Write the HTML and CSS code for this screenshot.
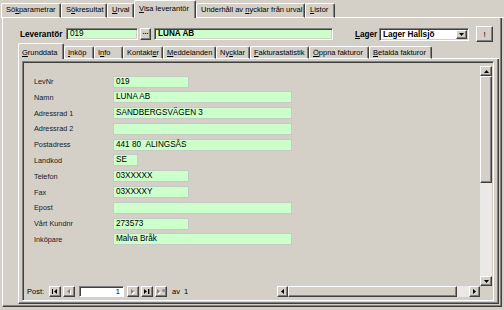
FILE: index.html
```html
<!DOCTYPE html>
<html>
<head>
    <title>Visa leverantör</title>
    <link rel="stylesheet" href="styles.css">
</head>
<body>
    <div class="app">
        <!-- main tabs -->
        <div class="top-tabs">
            <div class="tab">Sö<u>k</u>parametrar</div>
            <div class="tab">S<u>ö</u>kresultat</div>
            <div class="tab"><u>U</u>rval</div>
            <div class="tab active"><u>V</u>isa leverantör</div>
            <div class="tab">Underhåll av <u>n</u>ycklar från urval</div>
            <div class="tab"><u>L</u>istor</div>
            <div class="tab-fill"></div>
        </div>

        <div class="page">
            <!-- supplier header -->
            <div class="header">
                <span class="bold-label lev-label">Leverantör</span>
                <div class="field sunken lev-nr">019</div>
                <div class="btn dots">...</div>
                <div class="field sunken lev-name">LUNA AB</div>
                <span class="bold-label lager-label"><u>L</u>ager</span>
                <div class="select sunken">
                    <span class="select-text">Lager Hallsjö</span>
                    <div class="btn drop">
                        <svg width="5" height="3" viewBox="0 0 5 3"><path d="M0 0h5L2.5 3z" fill="#000"/></svg>
                    </div>
                </div>
                <div class="btn bang">!</div>
            </div>

            <!-- sub tabs -->
            <div class="inner-tabs">
                <div class="itab active"><u>G</u>runddata</div>
                <div class="itab"><u>I</u>nköp</div>
                <div class="itab">I<u>n</u>fo</div>
                <div class="itab">Kontakt<u>e</u>r</div>
                <div class="itab"><u>M</u>eddelanden</div>
                <div class="itab">Ny<u>c</u>klar</div>
                <div class="itab"><u>F</u>akturastatistik</div>
                <div class="itab"><u>Ö</u>ppna fakturor</div>
                <div class="itab"><u>B</u>etalda fakturor</div>
                <div class="tab-fill"></div>
            </div>

            <div class="panel">
                <div class="subform">
                    <div class="form">
                        <div class="row"><span class="label">LevNr</span><div class="input narrow">019</div></div>
                        <div class="row"><span class="label">Namn</span><div class="input wide">LUNA AB</div></div>
                        <div class="row"><span class="label">Adressrad 1</span><div class="input wide">SANDBERGSVÄGEN 3</div></div>
                        <div class="row"><span class="label">Adressrad 2</span><div class="input wide"></div></div>
                        <div class="row"><span class="label">Postadress</span><div class="input wide">441 80&nbsp;&nbsp;ALINGSÅS</div></div>
                        <div class="row"><span class="label">Landkod</span><div class="input tiny">SE</div></div>
                        <div class="row"><span class="label">Telefon</span><div class="input narrow">03XXXXX</div></div>
                        <div class="row"><span class="label">Fax</span><div class="input narrow">03XXXXY</div></div>
                        <div class="row"><span class="label">Epost</span><div class="input wide"></div></div>
                        <div class="row"><span class="label">Vårt Kundnr</span><div class="input narrow">273573</div></div>
                        <div class="row"><span class="label">Inköpare</span><div class="input wide">Malva Bråk</div></div>
                    </div>

                    <div class="vscroll">
                        <div class="btn sb-btn">
                            <svg width="5" height="3" viewBox="0 0 5 3"><path d="M0 3h5L2.5 0z" fill="#000"/></svg>
                        </div>
                        <div class="btn vthumb"></div>
                        <div class="track"></div>
                        <div class="btn sb-btn">
                            <svg width="5" height="3" viewBox="0 0 5 3"><path d="M0 0h5L2.5 3z" fill="#000"/></svg>
                        </div>
                    </div>

                    <!-- record navigation -->
                    <div class="navbar">
                        <span class="post-label">Post:</span>
                        <div class="btn nav-btn">
                            <svg width="6" height="5" viewBox="0 0 6 5"><rect x="0" y="0" width="1" height="5" fill="#000"/><path d="M5 0v5L2 2.5z" fill="#000"/></svg>
                        </div>
                        <div class="btn nav-btn gap-after">
                            <svg width="5" height="6" viewBox="0 0 5 6"><path d="M4 1v5L1 3.5z" fill="#fff"/><path d="M3 0v5L0 2.5z" fill="#808080"/></svg>
                        </div>
                        <div class="rec-input sunken-white">1</div>
                        <div class="btn nav-btn">
                            <svg width="5" height="6" viewBox="0 0 5 6"><path d="M1 1v5l3-2.5z" fill="#fff"/><path d="M0 0v5l3-2.5z" fill="#808080"/></svg>
                        </div>
                        <div class="btn nav-btn">
                            <svg width="6" height="5" viewBox="0 0 6 5"><path d="M0 0v5l3-2.5z" fill="#000"/><rect x="4" y="0" width="1.4" height="5" fill="#000"/></svg>
                        </div>
                        <div class="btn nav-btn">
                            <svg width="8" height="6" viewBox="0 0 8 6"><path d="M1 1v5l3-2.5z" fill="#fff"/><path d="M0 0v5l3-2.5z" fill="#808080"/><path d="M5 1.5h3M6.5 0v3M5.4 0.4l2.2 2.2M7.6 0.4l-2.2 2.2" stroke="#808080" stroke-width="0.7"/></svg>
                        </div>
                        <span class="of-label">av&nbsp;&nbsp;1</span>

                        <div class="hscroll">
                            <div class="btn sb-btn">
                                <svg width="3" height="5" viewBox="0 0 3 5"><path d="M3 0v5L0 2.5z" fill="#000"/></svg>
                            </div>
                            <div class="btn hthumb"></div>
                            <div class="track"></div>
                            <div class="btn sb-btn">
                                <svg width="3" height="5" viewBox="0 0 3 5"><path d="M0 0v5l3-2.5z" fill="#000"/></svg>
                            </div>
                        </div>
                    </div>
                    <div class="corner"></div>
                </div>
            </div>
        </div>
    </div>
</body>
</html>
```

FILE: styles.css
```css
body{
    margin: 0;
    background-color: #d4d0c8;
    font-family: "Liberation Sans", Arial, sans-serif;
    color: #000;
}
.app{
    width: 504px;
    height: 310px;
    overflow: hidden;
}

/* raised 3d look shared by buttons, tabs etc */
.btn{
    box-sizing: border-box;
    background-color: #d4d0c8;
    border: 1px solid;
    border-color: #fff #404040 #404040 #fff;
    box-shadow: inset -1px -1px #808080;
    display: flex;
    align-items: center;
    justify-content: center;
}
.sunken{
    box-sizing: border-box;
    border: 1px solid;
    border-color: #808080 #fff #fff #808080;
    box-shadow: inset 1px 1px #404040, inset -1px -1px #d4d0c8;
}

/* top tabs */
.top-tabs{
    display: flex;
    align-items: flex-end;
    height: 18px;
    padding-left: 1px;
}
.tab{
    box-sizing: border-box;
    height: 15px;
    border: 1px solid;
    border-color: #fff #404040 #fff #fff;
    border-radius: 2px 2px 0 0;
    box-shadow: inset -1px 0 #808080;
    font-size: 7.5px;
    line-height: 12px;
    padding-left: 4px;
    white-space: nowrap;
}
.tab:nth-child(1){ width: 60px; }
.tab:nth-child(2){ width: 46px; }
.tab:nth-child(3){ width: 27px; }
.tab:nth-child(4){ width: 62px; }
.tab:nth-child(5){ width: 109px; }
.tab:nth-child(6){ width: 30px; }
.tab.active{
    height: 18px;
    border-bottom: none;
    line-height: 16px;
}
.tab-fill{
    flex: 1;
    height: 1px;
    background-color: #fff;
}

/* the visible tab page */
.page{
    box-sizing: border-box;
    margin: 0 2px;
    height: 289px;
    border-left: 1px solid #fff;
    border-right: 1px solid #404040;
    border-bottom: 1px solid #404040;
    box-shadow: inset -1px -1px #808080;
    padding: 8px 2px 0 15px;
}
.header{
    display: flex;
    align-items: center;
    height: 16px;
    padding-left: 2px;
}
.bold-label{
    font-weight: bold;
    font-size: 8.2px;
}
.lev-label{
    width: 46px;
}
.field{
    height: 12px;
    background-color: #ccffcc;
    padding-left: 3px;
    font-size: 8.2px;
    line-height: 10px;
}
.lev-nr{
    width: 72px;
}
.lev-name{
    width: 179px;
    margin-left: 3px;
    font-weight: bold;
}
.dots{
    width: 11px;
    height: 12px;
    margin-left: 2px;
    font-size: 7px;
    line-height: 6px;
    align-items: flex-start;
    font-weight: bold;
}
.lager-label{
    margin-left: 22px;
    width: 24px;
}
.select{
    width: 90px;
    height: 13px;
    background-color: #fff;
    display: flex;
    align-items: center;
    padding: 1px 1px 1px 3px;
}
.select-text{
    flex: 1;
    font-weight: bold;
    font-size: 8.2px;
}
.drop{
    width: 11px;
    height: 9px;
}
.bang{
    width: 17px;
    height: 16px;
    margin-left: 7px;
    font-size: 8px;
}

/* inner tabs */
.inner-tabs{
    display: flex;
    align-items: flex-end;
    height: 17px;
}
.itab{
    box-sizing: border-box;
    height: 13px;
    border: 1px solid;
    border-color: #fff #404040 #fff #fff;
    border-radius: 2px 2px 0 0;
    box-shadow: inset -1px 0 #808080;
    font-size: 7.5px;
    line-height: 11px;
    padding-left: 3px;
    white-space: nowrap;
}
.itab:nth-child(1){ width: 46px; }
.itab:nth-child(2){ width: 30px; }
.itab:nth-child(3){ width: 29px; }
.itab:nth-child(4){ width: 40px; }
.itab:nth-child(5){ width: 53px; }
.itab:nth-child(6){ width: 34px; }
.itab:nth-child(7){ width: 59px; }
.itab:nth-child(8){ width: 60px; }
.itab:nth-child(9){ width: 63px; }
.itab.active{
    height: 16px;
    border-bottom: none;
    padding-top: 3px;
}

.panel{
    box-sizing: border-box;
    height: 245px;
    border-left: 1px solid #fff;
    border-right: 1px solid #404040;
    border-bottom: 1px solid #404040;
    box-shadow: inset -1px -1px #808080;
    padding: 2px 4px 2px 3px;
}
.subform{
    box-sizing: border-box;
    height: 240px;
    border: 1px solid;
    border-color: #808080 #fff #fff #808080;
    box-shadow: inset 1px 1px #404040, inset -1px -1px #d4d0c8;
    padding: 4px 1px 3px 1px;
    display: grid;
    grid-template-columns: 456px 12px;
    grid-template-rows: 1fr 11px;
}

/* form fields */
.form{
    display: flex;
    flex-direction: column;
    gap: 3.8px;
    padding: 9.5px 0 0 10px;
}
.row{
    display: flex;
    align-items: center;
    height: 12px;
}
.label{
    width: 79px;
    font-size: 7.3px;
    color: #1a1a1a;
}
.input{
    box-sizing: border-box;
    height: 12px;
    background-color: #ccffcc;
    border: 1px solid #c3cbc3;
    padding-left: 2px;
    font-size: 8.2px;
    line-height: 10px;
    white-space: nowrap;
}
.input.wide{ width: 179px; }
.input.narrow{ width: 76px; }
.input.tiny{ width: 25px; }

/* scrollbars */
.vscroll{
    display: flex;
    flex-direction: column;
}
.sb-btn{
    width: 12px;
    height: 10px;
}
.vthumb{
    height: 107px;
}
.track{
    flex: 1;
    background-color: #ebe9e5;
}
.hscroll{
    margin-left: auto;
    width: 203px;
    height: 11px;
    display: flex;
}
.hscroll .sb-btn{
    width: 11px;
    height: 11px;
}
.hthumb{
    width: 169px;
}
.corner{
    background-color: #d4d0c8;
}

/* record navigation */
.navbar{
    display: flex;
    align-items: center;
    padding-left: 3px;
    font-size: 7.5px;
}
.post-label{
    width: 22px;
}
.nav-btn{
    width: 12px;
    height: 11px;
    margin-right: 2px;
}
.gap-after{
    margin-right: 4px;
}
.sunken-white{
    box-sizing: border-box;
    border: 1px solid;
    border-color: #808080 #fff #fff #808080;
    box-shadow: inset 1px 1px #404040;
    background-color: #fff;
}
.rec-input{
    width: 45px;
    height: 11px;
    margin-right: 3px;
    text-align: right;
    padding-right: 3px;
    line-height: 9px;
}
.of-label{
    margin-left: 3px;
}
```
